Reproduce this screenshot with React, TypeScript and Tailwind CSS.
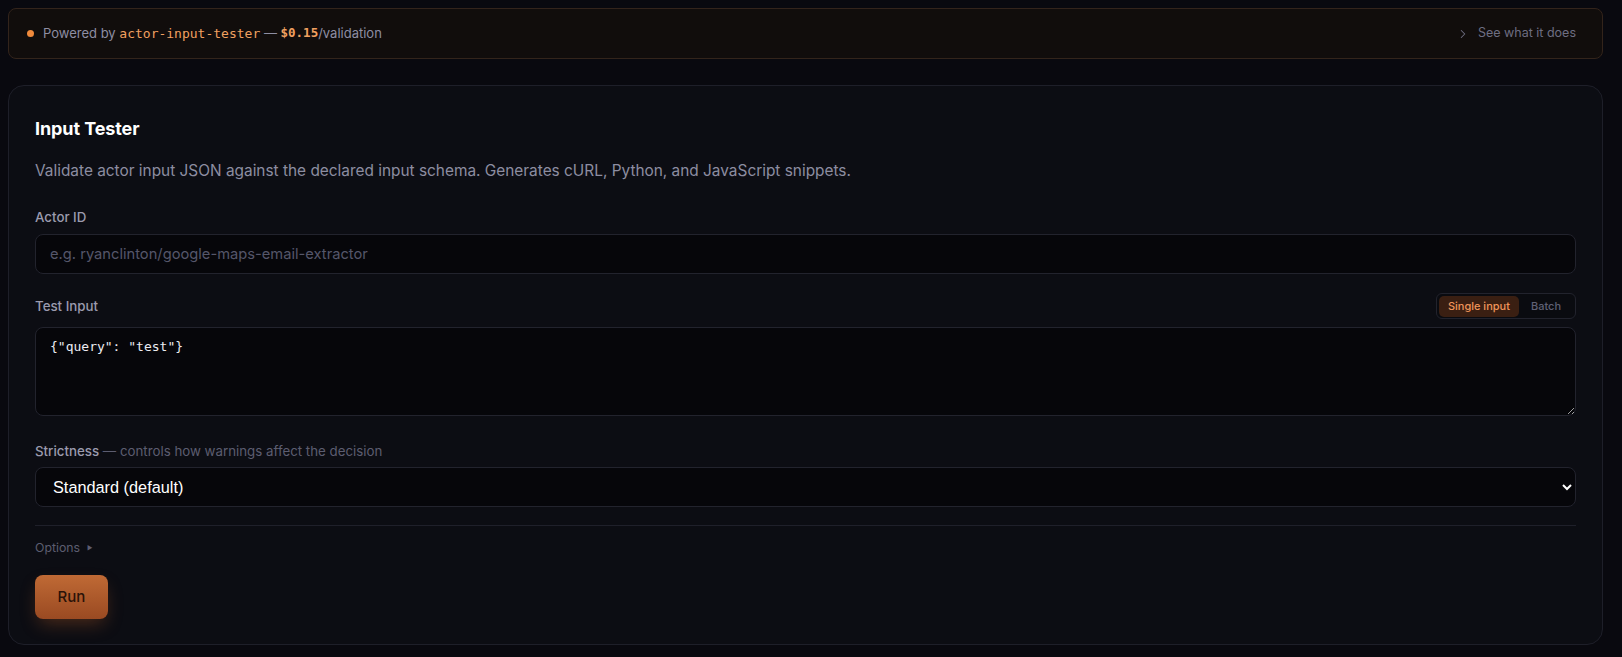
import { ChevronRight } from 'lucide-react';

const sans = { fontFamily: 'Inter, "Noto Sans", sans-serif' };

function PoweredBy() {
  return (
    <div className="flex h-[51px] items-center justify-between rounded-lg border border-[#33241b] bg-[#110d0c] pl-[18px] pr-[26px] text-[13px]">
      <div className="flex items-center">
        <span className="mr-[9px] h-[7px] w-[7px] rounded-full bg-[#f08a3c]" />
        <span className="text-[#8e8ea3]">Powered by&nbsp;</span>
        <span className="font-['DejaVu_Sans_Mono',monospace] text-[13px] text-[#f0a060]">actor-input-tester</span>
        <span className="text-[#8e8ea3]">&nbsp;—&nbsp;</span>
        <span className="font-['DejaVu_Sans_Mono',monospace] text-[12.5px] font-bold text-[#f0a060]">$0.15</span>
        <span className="text-[#8e8ea3]">/validation</span>
      </div>
      <button className="flex items-center gap-[8px] text-[12.5px] text-[#6e6e82]">
        <ChevronRight className="h-[14px] w-[14px]" strokeWidth={1.75} />
        See what it does
      </button>
    </div>
  );
}

function Label({ children }: { children: React.ReactNode }) {
  return <div className="text-[13.3px] font-medium leading-5 text-[#9b9bae]">{children}</div>;
}

export default function App() {
  return (
    <div className="min-h-screen bg-[#09090f] pt-2 pl-2 pr-[19px] pb-[13px]" style={sans}>
      <PoweredBy />

      <div className="mt-[26px] rounded-2xl border border-[#1e1f29] bg-[#0c0d13] px-[26px] pt-[29px] pb-[25px]">
        <h2 className="text-[18px] font-bold leading-7 tracking-[-0.005em] text-white">Input Tester</h2>
        <p className="mt-[17px] text-[15.4px] leading-[22px] text-[#8d8da1]">
          Validate actor input JSON against the declared input schema. Generates cURL, Python, and JavaScript snippets.
        </p>

        <div className="mt-[25px]">
          <Label>Actor ID</Label>
          <input
            className="mt-[7px] h-[40px] w-full rounded-lg border border-[#22232d] bg-[#06060a] px-[14px] text-[14.7px] text-white outline-none placeholder:text-[#55566a]"
            placeholder="e.g. ryanclinton/google-maps-email-extractor"
          />
        </div>

        <div className="mt-[19px]">
          <div className="flex items-center justify-between">
            <Label>Test Input</Label>
            <div className="flex h-[26px] items-center rounded-md border border-[#22232d] bg-[#0a0b10] p-[2px] text-[11px] font-medium">
              <span className="flex h-[21px] items-center rounded-[5px] bg-[#3a1f12] px-[9px] text-[#f0955a]">Single input</span>
              <span className="flex h-[21px] items-center px-[12px] text-[#5f6074]">Batch</span>
            </div>
          </div>
          <textarea
            className="mt-[8px] block h-[89px] w-full rounded-lg border border-[#22232d] bg-[#06060a] px-[14px] py-[9px] font-['DejaVu_Sans_Mono',monospace] text-[13px] text-[#ececf2] outline-none"
            defaultValue={'{"query": "test"}'}
          />
        </div>

        <div className="mt-[25px]">
          <div className="text-[13.3px] leading-5">
            <span className="font-medium text-[#9b9bae]">Strictness</span>
            <span className="text-[#5c5d70]"> — controls how warnings affect the decision</span>
          </div>
          <select
            className="mt-[6px] h-[40px] w-full rounded-lg border border-[#22232d] bg-[#06060a] pl-[13px] pr-[8px] font-['Liberation_Sans',Arial,sans-serif] text-[16.3px] text-white outline-none [color-scheme:dark]"
            defaultValue="standard"
          >
            <option value="standard">Standard (default)</option>
            <option value="strict">Strict</option>
            <option value="lenient">Lenient</option>
          </select>
        </div>

        <div className="mt-[18px] border-t border-[#1f202a]" />

        <div className="mt-[13px] flex items-center gap-[7px] text-[12.3px] leading-[18px] text-[#5c5d70]">
          Options
          <span className="text-[6px]">▶</span>
        </div>

        <button className="mt-[18px] h-[44px] w-[73px] rounded-lg bg-gradient-to-b from-[#c06a35] to-[#9a4a22] text-[15px] font-medium text-[#2a1208] shadow-[0_8px_18px_-4px_rgba(200,100,40,0.35)]">
          Run
        </button>
      </div>
    </div>
  );
}
